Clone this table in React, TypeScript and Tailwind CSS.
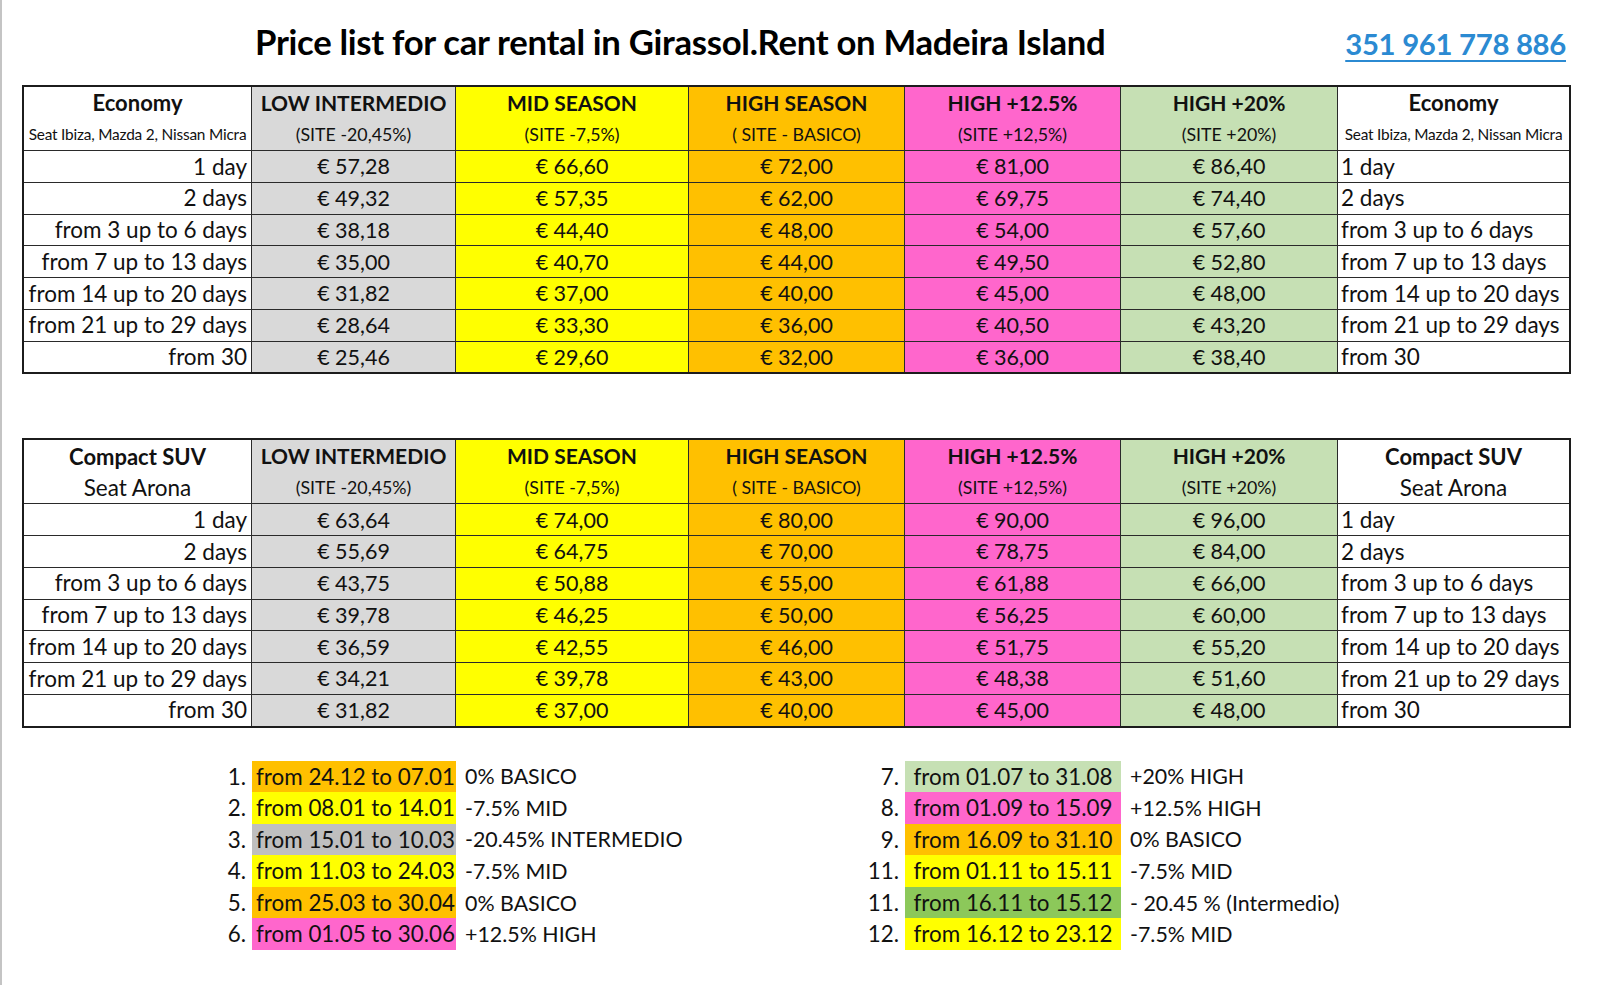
import React from "react";

const COLS = "grid grid-cols-[228px_204px_233px_216px_216px_217px_231px]";

type Season = { title: string; sub: string; bg: string };

const seasons: Season[] = [
  { title: "LOW INTERMEDIO", sub: "(SITE -20,45%)", bg: "bg-[#d9d9d9]" },
  { title: "MID SEASON", sub: "(SITE -7,5%)", bg: "bg-[#ffff00]" },
  { title: "HIGH SEASON", sub: "( SITE - BASICO)", bg: "bg-[#ffc000]" },
  { title: "HIGH +12.5%", sub: "(SITE +12,5%)", bg: "bg-[#ff66cc]" },
  { title: "HIGH +20%", sub: "(SITE +20%)", bg: "bg-[#c6e0b4]" },
];

const periods = [
  "1 day",
  "2 days",
  "from 3 up to 6 days",
  "from 7 up to 13 days",
  "from 14 up to 20 days",
  "from 21 up to 29 days",
  "from 30",
];

const economy = [
  ["57,28", "49,32", "38,18", "35,00", "31,82", "28,64", "25,46"],
  ["66,60", "57,35", "44,40", "40,70", "37,00", "33,30", "29,60"],
  ["72,00", "62,00", "48,00", "44,00", "40,00", "36,00", "32,00"],
  ["81,00", "69,75", "54,00", "49,50", "45,00", "40,50", "36,00"],
  ["86,40", "74,40", "57,60", "52,80", "48,00", "43,20", "38,40"],
];

const suv = [
  ["63,64", "55,69", "43,75", "39,78", "36,59", "34,21", "31,82"],
  ["74,00", "64,75", "50,88", "46,25", "42,55", "39,78", "37,00"],
  ["80,00", "70,00", "55,00", "50,00", "46,00", "43,00", "40,00"],
  ["90,00", "78,75", "61,88", "56,25", "51,75", "48,38", "45,00"],
  ["96,00", "84,00", "66,00", "60,00", "55,20", "51,60", "48,00"],
];

const legendLeft = [
  { n: "1.", range: "from 24.12 to 07.01", note: "0% BASICO", bg: "bg-[#ffc000]" },
  { n: "2.", range: "from 08.01 to 14.01", note: "-7.5% MID", bg: "bg-[#ffff00]" },
  { n: "3.", range: "from 15.01 to 10.03", note: "-20.45% INTERMEDIO", bg: "bg-[#bfbfbf]" },
  { n: "4.", range: "from 11.03 to 24.03", note: "-7.5% MID", bg: "bg-[#ffff00]" },
  { n: "5.", range: "from 25.03 to 30.04", note: "0% BASICO", bg: "bg-[#ffc000]" },
  { n: "6.", range: "from 01.05 to 30.06", note: "+12.5% HIGH", bg: "bg-[#ff66cc]" },
];

const legendRight = [
  { n: "7.", range: "from 01.07 to 31.08", note: "+20% HIGH", bg: "bg-[#c6e0b4]" },
  { n: "8.", range: "from 01.09 to 15.09", note: "+12.5% HIGH", bg: "bg-[#ff66cc]" },
  { n: "9.", range: "from 16.09 to 31.10", note: "0% BASICO", bg: "bg-[#ffc000]" },
  { n: "11.", range: "from 01.11 to 15.11", note: "-7.5% MID", bg: "bg-[#ffff00]" },
  { n: "11.", range: "from 16.11 to 15.12", note: "- 20.45 % (Intermedio)", bg: "bg-[#8cc85a]" },
  { n: "12.", range: "from 16.12 to 23.12", note: "-7.5% MID", bg: "bg-[#ffff00]" },
];

function PriceTable({
  name,
  models,
  smallModels,
  prices,
}: {
  name: string;
  models: string;
  smallModels: boolean;
  prices: string[][];
}) {
  const modelCls = smallModels
    ? "h-[31.5px] flex items-center justify-center text-[15.4px] tracking-[-0.2px] whitespace-nowrap"
    : "h-[31.5px] flex items-center justify-center text-[22.5px]";

  return (
    <div className="ml-[20px] w-fit border-2 border-[#1c1c1c]">
      {/* Header */}
      <div className={`${COLS} border-b border-[#2a2a2a]`}>
        <div className="border-r border-[#2a2a2a] bg-white">
          <div className="h-[31.5px] flex items-center justify-center text-[22px] font-bold">{name}</div>
          <div className={modelCls}>{models}</div>
        </div>
        {seasons.map((s) => (
          <div key={s.title} className={`border-r border-[#2a2a2a] ${s.bg}`}>
            <div className="h-[31.5px] flex items-center justify-center text-[21px] font-bold">{s.title}</div>
            <div className="h-[31.5px] flex items-center justify-center text-[17.8px]">{s.sub}</div>
          </div>
        ))}
        <div className="bg-white">
          <div className="h-[31.5px] flex items-center justify-center text-[22px] font-bold">{name}</div>
          <div className={modelCls}>{models}</div>
        </div>
      </div>

      {/* Rows */}
      {periods.map((p, r) => {
        const last = r === periods.length - 1;
        return (
          <div key={p} className={`${COLS} ${last ? "" : "border-b border-[#2a2a2a]"}`}>
            <div className="h-[30.75px] flex items-center justify-end pr-[4px] border-r border-[#2a2a2a] bg-white text-[22.5px] whitespace-nowrap">
              {p}
            </div>
            {seasons.map((s, c) => (
              <div
                key={s.title}
                className={`h-[30.75px] flex items-center justify-center border-r border-[#2a2a2a] text-[21.5px] ${s.bg}`}
              >
                € {prices[c][r]}
              </div>
            ))}
            <div className="h-[30.75px] flex items-center justify-start pl-[3px] bg-white text-[22.5px] whitespace-nowrap">
              {p}
            </div>
          </div>
        );
      })}
    </div>
  );
}

export default function App() {
  return (
    <div className="min-h-screen w-[1600px] bg-white border-l-2 border-[#c4c4c4] font-['Lato',sans-serif] text-[#111]">
      {/* Title */}
      <div className="h-[85px] flex items-baseline justify-between pl-[253px] pr-[34px] pt-[16px]">
        <h1 className="text-[34.7px] font-bold tracking-[-0.3px] text-black">
          Price list for car rental in Girassol.Rent on Madeira Island
        </h1>
        <a
          href="#"
          className="text-[29.3px] font-bold tracking-[-0.3px] text-[#2b8ad2] underline underline-offset-[5px] decoration-[2px]"
        >
          351 961 778 886
        </a>
      </div>

      <PriceTable
        name="Economy"
        models="Seat Ibiza, Mazda 2, Nissan Micra"
        smallModels
        prices={economy}
      />

      <div className="h-[64px]" />

      <PriceTable name="Compact SUV" models="Seat Arona" smallModels={false} prices={suv} />

      {/* Legend */}
      <div className={`${COLS} ml-[22px] mt-[33px] text-[22.4px]`}>
        {legendLeft.map((l, i) => {
          const r = legendRight[i];
          return (
            <React.Fragment key={i}>
              <div className="h-[31.6px] flex items-center justify-end pr-[6px]">{l.n}</div>
              <div className={`h-[31.6px] flex items-center justify-center pl-[3px] whitespace-nowrap ${l.bg}`}>
                {l.range}
              </div>
              <div className="h-[31.6px] flex items-center pl-[9px] whitespace-nowrap text-[21.4px]">{l.note}</div>
              <div className="h-[31.6px] flex items-center justify-end pr-[6px]">{r.n}</div>
              <div className={`h-[31.6px] flex items-center justify-center whitespace-nowrap ${r.bg}`}>{r.range}</div>
              <div className="col-span-2 h-[31.6px] flex items-center pl-[9px] whitespace-nowrap text-[21.4px]">
                {r.note}
              </div>
            </React.Fragment>
          );
        })}
      </div>
    </div>
  );
}
